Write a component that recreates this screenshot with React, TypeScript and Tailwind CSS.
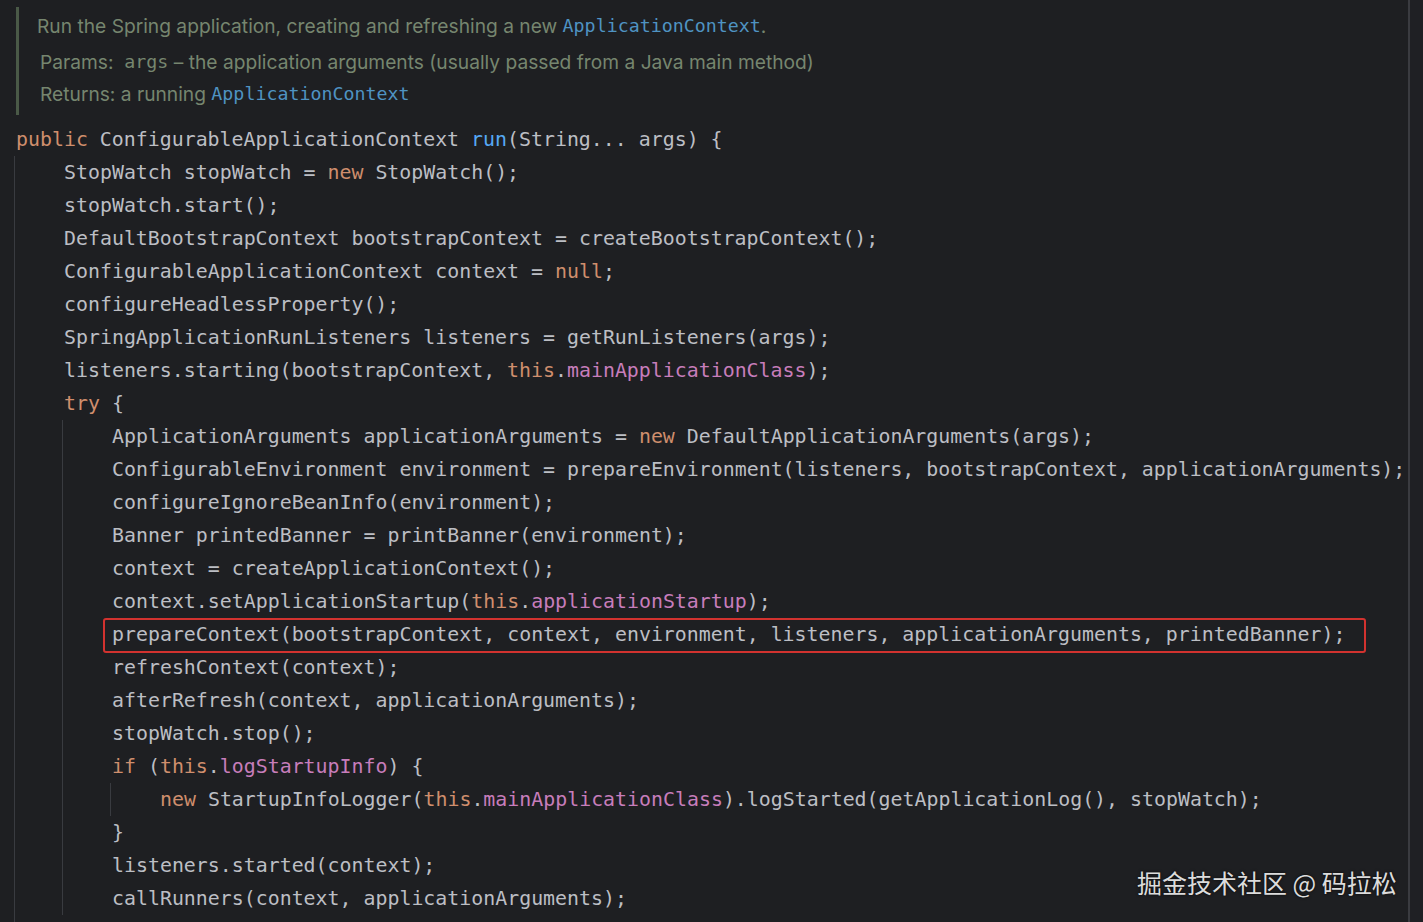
import React from "react";

type Tok = [string, string?];

const C: Record<string, string> = {
  k: "text-[#cf8e6d]",
  m: "text-[#56a8f5]",
  f: "text-[#c77dbb]",
};

function Line({ toks, boxed = false }: { toks: Tok[]; boxed?: boolean }) {
  return (
    <div className="relative h-[33px] flex items-center whitespace-pre">
      {boxed && (
        <div className="absolute left-[-9px] top-[0px] w-[1263px] h-[35px] border-2 border-[#d2322f] rounded-[3px]" />
      )}
      {toks.map(([t, c], i) => (
        <span key={i} className={c ? C[c] : undefined}>
          {t}
        </span>
      ))}
    </div>
  );
}

// indent block: guide sits 2px left of the parent text column, body 48px in
function Block({ children }: { children: React.ReactNode }) {
  return <div className="-ml-[2px] border-l border-[#393b40] pl-[49px]">{children}</div>;
}

export default function App() {
  return (
    <div className="relative w-[1423px] h-[922px] overflow-hidden bg-[#1e1f22] flex">
      <div className="w-[1408px] shrink-0">
        {/* doc comment */}
        <div className="ml-[16px] mt-[7px] mb-[8px] h-[108px] border-l-[3px] border-[#4a5947] pl-[18px] text-[19.2px] text-[#76866f] font-['Inter','Noto_Sans',sans-serif]">
          <div className="h-[38px] flex items-center whitespace-pre">
            Run the Spring application, creating and refreshing a new{" "}
            <span className="font-['DejaVu_Sans_Mono',monospace] text-[18.3px] text-[#4f93c2]">ApplicationContext</span>.
          </div>
          <div className="ml-[3px] h-[34px] flex items-center whitespace-pre">
            Params:{"  "}
            <span className="font-['DejaVu_Sans_Mono',monospace] text-[18.3px]">args</span> – the application arguments
            (usually passed from a Java main method)
          </div>
          <div className="ml-[3px] h-[30px] flex items-center whitespace-pre">
            Returns: a running{" "}
            <span className="font-['DejaVu_Sans_Mono',monospace] text-[18.3px] text-[#4f93c2]">ApplicationContext</span>
          </div>
        </div>

        {/* code */}
        <div className="pl-[16px] text-[19.9px] text-[#bcbec4] font-['DejaVu_Sans_Mono','Liberation_Mono',monospace]">
          <Line toks={[["public", "k"], [" ConfigurableApplicationContext "], ["run", "m"], ["(String... args) {"]]} />
          <Block>
            <Line toks={[["StopWatch stopWatch = "], ["new", "k"], [" StopWatch();"]]} />
            <Line toks={[["stopWatch.start();"]]} />
            <Line toks={[["DefaultBootstrapContext bootstrapContext = createBootstrapContext();"]]} />
            <Line toks={[["ConfigurableApplicationContext context = "], ["null", "k"], [";"]]} />
            <Line toks={[["configureHeadlessProperty();"]]} />
            <Line toks={[["SpringApplicationRunListeners listeners = getRunListeners(args);"]]} />
            <Line
              toks={[["listeners.starting(bootstrapContext, "], ["this", "k"], ["."], ["mainApplicationClass", "f"], [");"]]}
            />
            <Line toks={[["try", "k"], [" {"]]} />
            <Block>
              <Line
                toks={[["ApplicationArguments applicationArguments = "], ["new", "k"], [" DefaultApplicationArguments(args);"]]}
              />
              <Line
                toks={[
                  ["ConfigurableEnvironment environment = prepareEnvironment(listeners, bootstrapContext, applicationArguments);"],
                ]}
              />
              <Line toks={[["configureIgnoreBeanInfo(environment);"]]} />
              <Line toks={[["Banner printedBanner = printBanner(environment);"]]} />
              <Line toks={[["context = createApplicationContext();"]]} />
              <Line
                toks={[["context.setApplicationStartup("], ["this", "k"], ["."], ["applicationStartup", "f"], [");"]]}
              />
              <Line
                boxed
                toks={[
                  ["prepareContext(bootstrapContext, context, environment, listeners, applicationArguments, printedBanner);"],
                ]}
              />
              <Line toks={[["refreshContext(context);"]]} />
              <Line toks={[["afterRefresh(context, applicationArguments);"]]} />
              <Line toks={[["stopWatch.stop();"]]} />
              <Line toks={[["if", "k"], [" ("], ["this", "k"], ["."], ["logStartupInfo", "f"], [") {"]]} />
              <Block>
                <Line
                  toks={[
                    ["new", "k"],
                    [" StartupInfoLogger("],
                    ["this", "k"],
                    ["."],
                    ["mainApplicationClass", "f"],
                    [").logStarted(getApplicationLog(), stopWatch);"],
                  ]}
                />
              </Block>
              <Line toks={[["}"]]} />
              <Line toks={[["listeners.started(context);"]]} />
              <Line toks={[["callRunners(context, applicationArguments);"]]} />
            </Block>
            <Line toks={[["}"]]} />
          </Block>
        </div>
      </div>
      <div className="w-[2px] shrink-0 bg-[#3a3b40]" />
      <div className="flex-1 bg-[#1f2024]" />

      {/* watermark */}
      <div className="absolute left-[1137px] top-[864px] text-[25px] leading-[36px] text-[#dcdcdc] whitespace-pre font-['Noto_Sans_CJK_SC','Noto_Sans',sans-serif] [text-shadow:0_0_3px_rgba(0,0,0,0.8)]">
        掘金技术社区 @ 码拉松
      </div>
    </div>
  );
}
